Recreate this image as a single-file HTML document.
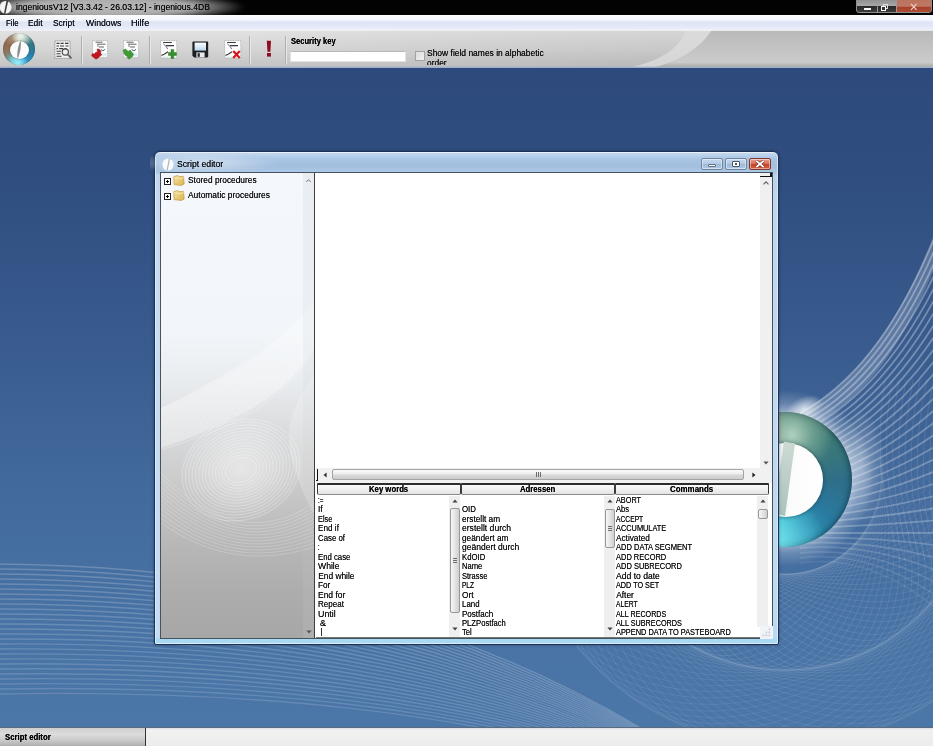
<!DOCTYPE html>
<html>
<head>
<meta charset="utf-8">
<title>ingeniousV12</title>
<style>
*{box-sizing:border-box;margin:0;padding:0}
html,body{width:933px;height:746px;overflow:hidden;background:linear-gradient(#020202 0,#020202 15px,#eef1fa 15px,#eef1fa 30px,#d0d0d0 30px,#d0d0d0 68px,#2e4a7c 68px,#385a8d 332px,#42699b 477px,#4b76a8 727px,#ececec 727px,#ececec 746px);font-family:"Liberation Sans",sans-serif;font-size:8.6px;color:#000}
.abs,.t{position:absolute}
.t{white-space:nowrap;transform-origin:0 0;display:block;text-shadow:0 0 .6px rgba(0,0,0,.8)}
#title{left:0;top:0;width:933px;height:15px;background:#020202;overflow:hidden}
#title .glow{left:-34px;top:-8px;width:280px;height:30px;background:radial-gradient(ellipse 50% 50% at 50% 50%,rgba(184,184,184,1) 0,rgba(172,172,172,1) 62%,rgba(110,110,110,.7) 84%,rgba(0,0,0,0) 100%);filter:blur(2px)}
#menu{left:0;top:15px;width:933px;height:15px;background:linear-gradient(#fcfdff 0,#f1f4fc 38%,#dfe5f6 45%,#e2e8f7 75%,#eef1fa 100%)}
#tool{left:0;top:30px;width:933px;height:38px;background:#d2d2d2;overflow:hidden}
#desk{left:0;top:68px;width:933px;height:660px;background:linear-gradient(#2e4a7c 0,#2f4d7f 15%,#385a8d 40%,#42699b 62%,#4973a5 85%,#4b76a8 100%);overflow:hidden}
#status{left:0;top:727px;width:933px;height:19px;background:linear-gradient(#d9dde2 0,#f1f1f1 2px,#ececec 100%);border-top:1px solid #5a6b80}
#status .cell{left:0;top:0;width:146px;height:18px;background:linear-gradient(#cfcfcf 0,#dcdcdc 35%,#c9c9c9 70%,#aeaeae 100%);border-right:1px solid #333}
.sep{width:2px;height:28px;top:6px;background:linear-gradient(90deg,#b0b0b0 0,#b0b0b0 50%,#e6e6e6 50%)}
#win{left:154px;top:150.5px;width:625px;height:494px;border-radius:6px 6px 2px 2px;border:1px solid #1c3357;background:linear-gradient(#c9dcf1 0,#a9c5e4 7px,#a2bfdf 14px,#afcae6 21px,#b7d3ee 60px,#b3d6f0 400px,#aad9f3 100%);box-shadow:inset 0 0 0 1px rgba(255,255,255,.55),0 0 3px rgba(10,20,40,.45)}
#client{left:160px;top:172px;width:613px;height:467px;border:1px solid #46525f;background:#fff;overflow:hidden}
.wb{top:158px;height:12px;border-radius:2px;border:1px solid #6f86a3;box-shadow:inset 0 0 0 1px rgba(255,255,255,.45)}
.hdr{height:11.6px;border:1px solid #3a3a3a;border-top:2px solid #2c2c2c;border-bottom:1px solid #8a8a8a;border-radius:1px 1px 2px 2px;background:linear-gradient(#fbfbfb,#e4e4e4)}
.sb{width:11px;background:#efefef}
.th{border:1px solid #979797;border-radius:2px;background:linear-gradient(90deg,#f7f7f7 0,#e4e4e4 50%,#cfcfcf 100%)}
.arr{width:0;height:0;border-style:solid}
#all{left:0;top:0;width:933px;height:746px;overflow:hidden;filter:blur(.4px)}
</style>
</head>
<body>
<div id="all" class="abs">

<div id="title" class="abs"><div class="glow abs"></div>
<svg class="abs" style="left:0;top:0" width="14" height="15" viewBox="0 0 14 15"><ellipse cx="5.6" cy="7.3" rx="5.9" ry="6.3" fill="#f4f4f4"/><path d="M6.6 0.6 L8.2 0.9 L5.3 14 L3.9 13.6 Z" fill="#3a3a3a"/></svg>
<span class="t" style="left:16.00px;top:3.19px;font-size:8.75px;line-height:8.75px;color:#0a0a0a;transform:scaleX(0.9847);">ingeniousV12 [V3.3.42 - 26.03.12] - ingenious.4DB</span>
<div class="abs" style="left:856px;top:-2px;width:76px;height:14.5px;border:1px solid #8f8f8f;border-radius:0 0 3px 3px;overflow:hidden;background:linear-gradient(#8d8d8d 0,#a9a9a9 52%,#2b2b2b 57%,#3a3a3a 100%)">
<div class="abs" style="left:19.5px;top:0;width:1px;height:14px;background:#9a9a9a"></div>
<div class="abs" style="left:38.5px;top:0;width:1px;height:14px;background:#9a9a9a"></div>
<div class="abs" style="left:39.5px;top:0;width:36px;height:14px;background:linear-gradient(#b8735f 0,#c07863 52%,#a8412c 58%,#b04d35 100%)"></div>
<div class="abs" style="left:6.5px;top:8.6px;width:7.6px;height:2.2px;background:#fff;border-radius:.5px"></div>
<div class="abs" style="left:25.5px;top:4.5px;width:5px;height:5px;border:1.2px solid #ddd"></div>
<div class="abs" style="left:23.5px;top:6.5px;width:5.5px;height:5.5px;border:1.3px solid #fff;background:#333"></div>
<svg class="abs" style="left:53.2px;top:4px" width="8" height="8" viewBox="0 0 8 8"><path d="M1 0.8 L6.6 6.8 M6.6 0.8 L1 6.8" stroke="#f0d2c8" stroke-width="1.1" fill="none"/></svg>
</div>
</div>
<div id="menu" class="abs">
<span class="t" style="left:5.50px;top:3.69px;font-size:8.75px;line-height:8.75px;color:#0c0c14;transform:scaleX(0.9007);">File</span>
<span class="t" style="left:28.30px;top:3.69px;font-size:8.75px;line-height:8.75px;color:#0c0c14;transform:scaleX(0.9617);">Edit</span>
<span class="t" style="left:53.40px;top:3.69px;font-size:8.75px;line-height:8.75px;color:#0c0c14;transform:scaleX(0.9612);">Script</span>
<span class="t" style="left:85.50px;top:3.69px;font-size:8.75px;line-height:8.75px;color:#0c0c14;transform:scaleX(0.9945);">Windows</span>
<span class="t" style="left:131.40px;top:3.69px;font-size:8.75px;line-height:8.75px;color:#0c0c14;transform:scaleX(1.0397);">Hilfe</span>
</div>
<div id="tool" class="abs">
<svg class="abs" style="left:0;top:0" width="933" height="38" viewBox="0 0 933 38">
<defs>
<linearGradient id="tl" x1="0" y1="0" x2="0" y2="1"><stop offset="0" stop-color="#e2e2e2"/><stop offset=".45" stop-color="#d6d6d6"/><stop offset="1" stop-color="#c3c3c3"/></linearGradient>
<linearGradient id="tr" x1="0" y1="0" x2="0" y2="1"><stop offset="0" stop-color="#b9b9b9"/><stop offset=".5" stop-color="#c3c3c3"/><stop offset=".85" stop-color="#cbcbcb"/><stop offset=".93" stop-color="#b4b4b0"/><stop offset="1" stop-color="#aaaaa6"/></linearGradient>
<linearGradient id="tdk" x1="0" y1="0" x2="1" y2="0"><stop offset="0" stop-color="#000" stop-opacity="0"/><stop offset=".6" stop-color="#000" stop-opacity=".055"/><stop offset="1" stop-color="#000" stop-opacity=".055"/></linearGradient>
<linearGradient id="tb" x1="0" y1="0" x2="1" y2="0"><stop offset="0" stop-color="#d9d9d9" stop-opacity="0"/><stop offset="1" stop-color="#e6e6e6" stop-opacity=".9"/></linearGradient>
<linearGradient id="rf" x1="0" y1="0" x2="1" y2="0"><stop offset="0" stop-color="#c9c9c9" stop-opacity="1"/><stop offset="1" stop-color="#c9c9c9" stop-opacity="0"/></linearGradient>
</defs>
<rect x="0" y="0" width="933" height="38" fill="url(#tl)"/>
<rect x="250" y="0" width="683" height="38" fill="url(#tdk)"/>
<path d="M686 0 C680 18 660 32 626 38 L651 38 C680 32 700 18 712 0 Z" fill="#dcdcdc" opacity=".8"/>
<path d="M712 0 C700 18 680 32 651 38 L933 38 L933 0 Z" fill="url(#tr)"/>
<rect x="0" y="0" width="933" height="1" fill="#f4f4f4" opacity=".8"/>
<rect x="0" y="36.6" width="933" height="1.4" fill="#9fb0c6"/>
</svg>
<div class="abs" style="left:0.4px;top:0.3px;width:38px;height:38px;border-radius:50%;background:radial-gradient(circle,rgba(240,214,204,.0) 0,rgba(240,214,204,.0) 78%,rgba(240,214,204,.6) 84%,rgba(240,214,204,0) 100%)"></div>
<div class="abs" style="left:3.4px;top:3.3px;width:32px;height:32px;border-radius:50%;background:conic-gradient(from 0deg,#ccd6ca 0deg,#86a79c 30deg,#2f7787 70deg,#2a7ca6 110deg,#2f9acb 150deg,#63d2ec 182deg,#68b6bf 215deg,#8c7a62 250deg,#92694c 290deg,#ab927a 330deg,#ccd6ca 360deg);box-shadow:inset 0 0 2px rgba(20,50,60,.55)"></div>
<div class="abs" style="left:3.4px;top:3.3px;width:32px;height:32px;border-radius:50%;background:radial-gradient(circle at 58% 10%,rgba(245,250,245,.85) 0,rgba(245,250,245,0) 30%),radial-gradient(circle at 45% 97%,rgba(170,240,250,.85) 0,rgba(120,220,240,0) 32%)"></div>
<div class="abs" style="left:10.2px;top:10.6px;width:18.4px;height:18px;border-radius:50%;background:#fbfbfb;box-shadow:0 0 1.5px rgba(20,40,50,.7)"></div>
<svg class="abs" style="left:14px;top:9px" width="12" height="22" viewBox="0 0 12 22"><path d="M6.6 1.2 C7.6 6 6.2 14 3.6 20.2 C2.6 15 3.8 7 6.6 1.2 Z" fill="#8d8d8d"/></svg>
<svg class="abs" style="left:54px;top:9.5px" width="19" height="20" viewBox="0 0 19 20">
<rect x=".9" y=".9" width="15.2" height="17.4" fill="#f4f4f4" stroke="#8c8c8c" stroke-width=".9" stroke-dasharray="1.2 .5"/>
<g stroke="#3c3c3c" stroke-width="1.1"><path d="M2.5 3.4h3M6.5 3.4h3.2M11 3.4h3.5M2.5 6h2.5M6 6h4M11.5 6h3M2.5 8.6h1.6M5.2 8.6h4M10.5 8.6h2M2.5 11.2h4.5M2.5 13.8h4M2.5 16.2h5"/></g>
<circle cx="11.3" cy="12" r="3.1" fill="#e9eef2" stroke="#444" stroke-width="1.1"/>
<path d="M13.6 14.4 L17 17.8" stroke="#6b5a50" stroke-width="1.7" stroke-linecap="round"/>
</svg>
<svg class="abs" style="left:92.0px;top:10px" width="17" height="19" viewBox="0 0 17 19">
<rect x=".6" y=".6" width="15" height="17" fill="#fcfcfc" stroke="#a9a9a9" stroke-width=".8" stroke-dasharray="1.1 .6"/>
<path d="M3.5 2.2h7M5 4.2 h8.5 M6 5.2v1.6M7 7h5" stroke="#555" stroke-width=".9" fill="none"/>
<path d="M9 9.2c0 2 3.6 2 3.6 0" stroke="#3b5f8a" stroke-width="1" fill="none"/>
<path d="M10 13h4.5v3.5H10z" fill="#dff0f4"/>
</svg>
<svg class="abs" style="left:90.5px;top:17.5px" width="12" height="12" viewBox="0 0 12 12"><path d="M6.2 1 C8.8 1 10.6 3 9.6 5.8 L11 6.6 L6 10.8 L4.8 11 L0.6 7.8 L1.6 5.4 L3.6 6.2 C4 4.6 5 4 6.4 4.4 Z" fill="#c4141c" stroke="#8e0c12" stroke-width=".5"/></svg>
<svg class="abs" style="left:123.0px;top:10px" width="17" height="19" viewBox="0 0 17 19">
<rect x=".6" y=".6" width="15" height="17" fill="#fcfcfc" stroke="#a9a9a9" stroke-width=".8" stroke-dasharray="1.1 .6"/>
<path d="M3.5 2.2h7M5 4.2 h8.5 M6 5.2v1.6M7 7h5" stroke="#555" stroke-width=".9" fill="none"/>
<path d="M9 9.2c0 2 3.6 2 3.6 0" stroke="#3b5f8a" stroke-width="1" fill="none"/>
<path d="M10 13h4.5v3.5H10z" fill="#dff0f4"/>
</svg>
<svg class="abs" style="left:121.5px;top:17.5px" width="13" height="12" viewBox="0 0 13 12"><path d="M1 2.2 L3.4 1 L6.2 3.4 L8 2 L11.6 6.2 L10.4 8.6 L7.4 11 L5.6 10.2 L6 8.8 C4 8.6 2 6.6 1 2.2 Z" fill="#3f9c34" stroke="#2a7a22" stroke-width=".5"/></svg>
<svg class="abs" style="left:160.0px;top:10px" width="18" height="19" viewBox="0 0 18 19">
<rect x=".6" y=".6" width="16.2" height="17.4" fill="#fcfcfc" stroke="#a9a9a9" stroke-width=".8" stroke-dasharray="1.1 .6"/>
<path d="M3.2 2.5h8.6M6 5.6 h8" stroke="#3a3a3a" stroke-width="1.1" fill="none"/>
<path d="M3.4 3.8 L6 6.4 L7.8 9" stroke="#7a4a8a" stroke-width=".9" fill="none"/>
<path d="M1.4 15.4 L4.6 14 L8 11.8" stroke="#333" stroke-width="1.1" fill="none"/>
<path d="M1.5 16.6h7v1.2h-7z" fill="#cfeaea"/>
</svg>
<svg class="abs" style="left:168.3px;top:19.3px" width="9" height="10" viewBox="0 0 9 10"><path d="M3 .6h2.8v3h2.6v2.8H5.8v3H3v-3H.4V3.600H3z" fill="#35912c" stroke="#2b7d22" stroke-width=".5"/></svg>
<svg class="abs" style="left:191.5px;top:11px" width="17" height="17" viewBox="0 0 17 17">
<defs><linearGradient id="fl" x1="0" y1="0" x2="0" y2="1"><stop offset="0" stop-color="#ffffff"/><stop offset="1" stop-color="#b9d6ee"/></linearGradient></defs>
<path d="M1.2 .6h14.2a.8.8 0 0 1 .8.8v14.2a.8.8 0 0 1-.8.8H2.2L.4 14.8V1.4a.8.8 0 0 1 .8-.8z" fill="#1e1f22"/>
<rect x="2.6" y="1.6" width="11.4" height="8" fill="url(#fl)"/>
<rect x="4.4" y="11.4" width="8.2" height="5" fill="#e6e9ee"/>
<rect x="5.6" y="12.2" width="2.2" height="3.6" fill="#24262a"/>
</svg>
<svg class="abs" style="left:223.5px;top:10px" width="18" height="19" viewBox="0 0 18 19">
<rect x=".6" y=".6" width="16.2" height="17.4" fill="#fcfcfc" stroke="#a9a9a9" stroke-width=".8" stroke-dasharray="1.1 .6"/>
<path d="M3.2 2.5h8.6M6 5.6 h8" stroke="#3a3a3a" stroke-width="1.1" fill="none"/>
<path d="M3.4 3.8 L6 6.4 L7.8 9" stroke="#7a4a8a" stroke-width=".9" fill="none"/>
<path d="M1.4 15.4 L4.6 14 L8 11.8" stroke="#333" stroke-width="1.1" fill="none"/>
<path d="M1.5 16.6h7v1.2h-7z" fill="#cfeaea"/>
</svg>
<svg class="abs" style="left:231.6px;top:19.6px" width="9" height="9" viewBox="0 0 9 9"><path d="M1.2 1 L7.8 8 M7.8 1 L1.2 8" stroke="#d4161c" stroke-width="2.2" fill="none"/></svg>
<svg class="abs" style="left:264.5px;top:10px" width="8" height="18" viewBox="0 0 8 18"><path d="M1.8 .8h4.2l-.7 11H2.5z" fill="#8f0a1c"/><rect x="2" y="13" width="3.9" height="3.6" fill="#8f0a1c"/></svg>
<div class="abs sep" style="left:80.5px"></div>
<div class="abs sep" style="left:148.8px"></div>
<div class="abs sep" style="left:249.2px"></div>
<div class="abs sep" style="left:284.6px"></div>
<span class="t" style="left:291.10px;top:7.39px;font-size:8.75px;line-height:8.75px;color:#000;font-weight:bold;transform:scaleX(0.8650);">Security key</span>
<div class="abs" style="left:290px;top:21px;width:115.5px;height:11px;background:#fff;border:1px solid #e3e3e3;border-top-color:#b9b9b9"></div>
<div class="abs" style="left:415px;top:21px;width:10px;height:10px;background:linear-gradient(135deg,#dedede,#f0f0f0);border:1px solid #a2a2a2"></div>
<div class="abs" style="left:0;top:0;width:933px;height:35.3px;overflow:hidden">
<span class="t" style="left:427.40px;top:19.10px;font-size:8.50px;line-height:8.50px;color:#0a0a0a;transform:scaleX(0.9959);">Show field names in alphabetic</span>
<span class="t" style="left:427.40px;top:29.40px;font-size:8.50px;line-height:8.50px;color:#0a0a0a;transform:scaleX(0.9877);">order</span>
</div>
</div>
<div id="desk" class="abs">
<svg class="abs" style="left:0;top:0" width="933" height="660" viewBox="0 68 933 660" fill="none">
<defs>
<radialGradient id="halo" cx=".5" cy=".5" r=".5"><stop offset=".72" stop-color="#ffffff" stop-opacity=".55"/><stop offset=".86" stop-color="#dfeaf6" stop-opacity=".22"/><stop offset="1" stop-color="#ffffff" stop-opacity="0"/></radialGradient>
<linearGradient id="ring" x1=".2" y1="0" x2=".75" y2="1"><stop offset="0" stop-color="#8a6a58"/><stop offset=".25" stop-color="#4f7f6c"/><stop offset=".55" stop-color="#2b6a8c"/><stop offset=".8" stop-color="#2d86aa"/><stop offset="1" stop-color="#2fb4cc"/></linearGradient>
<radialGradient id="ringb" cx=".42" cy=".98" r=".42"><stop offset="0" stop-color="#6fe4f0" stop-opacity=".95"/><stop offset="1" stop-color="#35bcd0" stop-opacity="0"/></radialGradient>
<radialGradient id="ringt" cx=".55" cy=".05" r=".3"><stop offset="0" stop-color="#d8eadf" stop-opacity=".8"/><stop offset="1" stop-color="#9cc4b4" stop-opacity="0"/></radialGradient>
<radialGradient id="ringe" cx=".5" cy=".5" r=".5"><stop offset=".86" stop-color="#000" stop-opacity="0"/><stop offset="1" stop-color="#0a2a3a" stop-opacity=".35"/></radialGradient>
<linearGradient id="lowg" gradientUnits="userSpaceOnUse" x1="0" y1="430" x2="0" y2="560"><stop offset="0" stop-color="#000"/><stop offset="1" stop-color="#fff"/></linearGradient>
<radialGradient id="glw" cx=".5" cy=".5" r=".5"><stop offset="0" stop-color="#fff" stop-opacity=".75"/><stop offset="1" stop-color="#fff" stop-opacity="0"/></radialGradient>
<linearGradient id="fanfade" x1="0" y1="0" x2="1" y2="0"><stop offset="0" stop-color="#fff" stop-opacity=".5"/><stop offset="1" stop-color="#fff" stop-opacity=".22"/></linearGradient>
</defs>
<mask id="lowm"><rect x="0" y="68" width="933" height="660" fill="url(#lowg)"/></mask>
<g mask="url(#lowm)">
<ellipse cx="785" cy="478" rx="192" ry="96" transform="rotate(0 785 478)" stroke="#fff" stroke-opacity=".085" stroke-width="1"/>
<ellipse cx="785" cy="478" rx="192" ry="96" transform="rotate(4 785 478)" stroke="#fff" stroke-opacity=".085" stroke-width="1"/>
<ellipse cx="785" cy="478" rx="192" ry="96" transform="rotate(8 785 478)" stroke="#fff" stroke-opacity=".085" stroke-width="1"/>
<ellipse cx="785" cy="478" rx="192" ry="96" transform="rotate(12 785 478)" stroke="#fff" stroke-opacity=".085" stroke-width="1"/>
<ellipse cx="785" cy="478" rx="192" ry="96" transform="rotate(16 785 478)" stroke="#fff" stroke-opacity=".085" stroke-width="1"/>
<ellipse cx="785" cy="478" rx="192" ry="96" transform="rotate(20 785 478)" stroke="#fff" stroke-opacity=".085" stroke-width="1"/>
<ellipse cx="785" cy="478" rx="192" ry="96" transform="rotate(24 785 478)" stroke="#fff" stroke-opacity=".085" stroke-width="1"/>
<ellipse cx="785" cy="478" rx="192" ry="96" transform="rotate(28 785 478)" stroke="#fff" stroke-opacity=".085" stroke-width="1"/>
<ellipse cx="785" cy="478" rx="192" ry="96" transform="rotate(32 785 478)" stroke="#fff" stroke-opacity=".085" stroke-width="1"/>
<ellipse cx="785" cy="478" rx="192" ry="96" transform="rotate(36 785 478)" stroke="#fff" stroke-opacity=".085" stroke-width="1"/>
<ellipse cx="785" cy="478" rx="192" ry="96" transform="rotate(40 785 478)" stroke="#fff" stroke-opacity=".085" stroke-width="1"/>
<ellipse cx="785" cy="478" rx="192" ry="96" transform="rotate(44 785 478)" stroke="#fff" stroke-opacity=".085" stroke-width="1"/>
<ellipse cx="785" cy="478" rx="192" ry="96" transform="rotate(48 785 478)" stroke="#fff" stroke-opacity=".085" stroke-width="1"/>
<ellipse cx="785" cy="478" rx="192" ry="96" transform="rotate(52 785 478)" stroke="#fff" stroke-opacity=".085" stroke-width="1"/>
<ellipse cx="785" cy="478" rx="192" ry="96" transform="rotate(56 785 478)" stroke="#fff" stroke-opacity=".085" stroke-width="1"/>
<ellipse cx="785" cy="478" rx="192" ry="96" transform="rotate(60 785 478)" stroke="#fff" stroke-opacity=".085" stroke-width="1"/>
<ellipse cx="785" cy="478" rx="192" ry="96" transform="rotate(64 785 478)" stroke="#fff" stroke-opacity=".085" stroke-width="1"/>
<ellipse cx="785" cy="478" rx="192" ry="96" transform="rotate(68 785 478)" stroke="#fff" stroke-opacity=".085" stroke-width="1"/>
<ellipse cx="785" cy="478" rx="192" ry="96" transform="rotate(72 785 478)" stroke="#fff" stroke-opacity=".085" stroke-width="1"/>
<ellipse cx="785" cy="478" rx="192" ry="96" transform="rotate(76 785 478)" stroke="#fff" stroke-opacity=".085" stroke-width="1"/>
<ellipse cx="785" cy="478" rx="192" ry="96" transform="rotate(80 785 478)" stroke="#fff" stroke-opacity=".085" stroke-width="1"/>
<ellipse cx="785" cy="478" rx="192" ry="96" transform="rotate(84 785 478)" stroke="#fff" stroke-opacity=".085" stroke-width="1"/>
<ellipse cx="785" cy="478" rx="192" ry="96" transform="rotate(88 785 478)" stroke="#fff" stroke-opacity=".085" stroke-width="1"/>
<ellipse cx="785" cy="478" rx="192" ry="96" transform="rotate(92 785 478)" stroke="#fff" stroke-opacity=".085" stroke-width="1"/>
<ellipse cx="785" cy="478" rx="192" ry="96" transform="rotate(96 785 478)" stroke="#fff" stroke-opacity=".085" stroke-width="1"/>
<ellipse cx="785" cy="478" rx="192" ry="96" transform="rotate(100 785 478)" stroke="#fff" stroke-opacity=".085" stroke-width="1"/>
<ellipse cx="785" cy="478" rx="192" ry="96" transform="rotate(104 785 478)" stroke="#fff" stroke-opacity=".085" stroke-width="1"/>
<ellipse cx="785" cy="478" rx="192" ry="96" transform="rotate(108 785 478)" stroke="#fff" stroke-opacity=".085" stroke-width="1"/>
<ellipse cx="785" cy="478" rx="192" ry="96" transform="rotate(112 785 478)" stroke="#fff" stroke-opacity=".085" stroke-width="1"/>
<ellipse cx="785" cy="478" rx="192" ry="96" transform="rotate(116 785 478)" stroke="#fff" stroke-opacity=".085" stroke-width="1"/>
<ellipse cx="785" cy="478" rx="192" ry="96" transform="rotate(120 785 478)" stroke="#fff" stroke-opacity=".085" stroke-width="1"/>
<ellipse cx="785" cy="478" rx="192" ry="96" transform="rotate(124 785 478)" stroke="#fff" stroke-opacity=".085" stroke-width="1"/>
<ellipse cx="785" cy="478" rx="192" ry="96" transform="rotate(128 785 478)" stroke="#fff" stroke-opacity=".085" stroke-width="1"/>
<ellipse cx="785" cy="478" rx="192" ry="96" transform="rotate(132 785 478)" stroke="#fff" stroke-opacity=".085" stroke-width="1"/>
<ellipse cx="785" cy="478" rx="192" ry="96" transform="rotate(136 785 478)" stroke="#fff" stroke-opacity=".085" stroke-width="1"/>
<ellipse cx="785" cy="478" rx="192" ry="96" transform="rotate(140 785 478)" stroke="#fff" stroke-opacity=".085" stroke-width="1"/>
<ellipse cx="785" cy="478" rx="192" ry="96" transform="rotate(144 785 478)" stroke="#fff" stroke-opacity=".085" stroke-width="1"/>
<ellipse cx="785" cy="478" rx="192" ry="96" transform="rotate(148 785 478)" stroke="#fff" stroke-opacity=".085" stroke-width="1"/>
<ellipse cx="785" cy="478" rx="192" ry="96" transform="rotate(152 785 478)" stroke="#fff" stroke-opacity=".085" stroke-width="1"/>
<ellipse cx="785" cy="478" rx="192" ry="96" transform="rotate(156 785 478)" stroke="#fff" stroke-opacity=".085" stroke-width="1"/>
<ellipse cx="785" cy="478" rx="192" ry="96" transform="rotate(160 785 478)" stroke="#fff" stroke-opacity=".085" stroke-width="1"/>
<ellipse cx="785" cy="478" rx="192" ry="96" transform="rotate(164 785 478)" stroke="#fff" stroke-opacity=".085" stroke-width="1"/>
<ellipse cx="785" cy="478" rx="192" ry="96" transform="rotate(168 785 478)" stroke="#fff" stroke-opacity=".085" stroke-width="1"/>
<ellipse cx="785" cy="478" rx="192" ry="96" transform="rotate(172 785 478)" stroke="#fff" stroke-opacity=".085" stroke-width="1"/>
<ellipse cx="785" cy="478" rx="192" ry="96" transform="rotate(176 785 478)" stroke="#fff" stroke-opacity=".085" stroke-width="1"/>
<ellipse cx="785" cy="478" rx="268" ry="192" transform="rotate(0 785 478)" stroke="#fff" stroke-opacity=".075" stroke-width="1"/>
<ellipse cx="785" cy="478" rx="268" ry="192" transform="rotate(5 785 478)" stroke="#fff" stroke-opacity=".075" stroke-width="1"/>
<ellipse cx="785" cy="478" rx="268" ry="192" transform="rotate(10 785 478)" stroke="#fff" stroke-opacity=".075" stroke-width="1"/>
<ellipse cx="785" cy="478" rx="268" ry="192" transform="rotate(15 785 478)" stroke="#fff" stroke-opacity=".075" stroke-width="1"/>
<ellipse cx="785" cy="478" rx="268" ry="192" transform="rotate(20 785 478)" stroke="#fff" stroke-opacity=".075" stroke-width="1"/>
<ellipse cx="785" cy="478" rx="268" ry="192" transform="rotate(25 785 478)" stroke="#fff" stroke-opacity=".075" stroke-width="1"/>
<ellipse cx="785" cy="478" rx="268" ry="192" transform="rotate(30 785 478)" stroke="#fff" stroke-opacity=".075" stroke-width="1"/>
<ellipse cx="785" cy="478" rx="268" ry="192" transform="rotate(35 785 478)" stroke="#fff" stroke-opacity=".075" stroke-width="1"/>
<ellipse cx="785" cy="478" rx="268" ry="192" transform="rotate(40 785 478)" stroke="#fff" stroke-opacity=".075" stroke-width="1"/>
<ellipse cx="785" cy="478" rx="268" ry="192" transform="rotate(45 785 478)" stroke="#fff" stroke-opacity=".075" stroke-width="1"/>
<ellipse cx="785" cy="478" rx="268" ry="192" transform="rotate(50 785 478)" stroke="#fff" stroke-opacity=".075" stroke-width="1"/>
<ellipse cx="785" cy="478" rx="268" ry="192" transform="rotate(55 785 478)" stroke="#fff" stroke-opacity=".075" stroke-width="1"/>
<ellipse cx="785" cy="478" rx="268" ry="192" transform="rotate(60 785 478)" stroke="#fff" stroke-opacity=".075" stroke-width="1"/>
<ellipse cx="785" cy="478" rx="268" ry="192" transform="rotate(65 785 478)" stroke="#fff" stroke-opacity=".075" stroke-width="1"/>
<ellipse cx="785" cy="478" rx="268" ry="192" transform="rotate(70 785 478)" stroke="#fff" stroke-opacity=".075" stroke-width="1"/>
<ellipse cx="785" cy="478" rx="268" ry="192" transform="rotate(75 785 478)" stroke="#fff" stroke-opacity=".075" stroke-width="1"/>
<ellipse cx="785" cy="478" rx="268" ry="192" transform="rotate(80 785 478)" stroke="#fff" stroke-opacity=".075" stroke-width="1"/>
<ellipse cx="785" cy="478" rx="268" ry="192" transform="rotate(85 785 478)" stroke="#fff" stroke-opacity=".075" stroke-width="1"/>
<ellipse cx="785" cy="478" rx="268" ry="192" transform="rotate(90 785 478)" stroke="#fff" stroke-opacity=".075" stroke-width="1"/>
<ellipse cx="785" cy="478" rx="268" ry="192" transform="rotate(95 785 478)" stroke="#fff" stroke-opacity=".075" stroke-width="1"/>
<ellipse cx="785" cy="478" rx="268" ry="192" transform="rotate(100 785 478)" stroke="#fff" stroke-opacity=".075" stroke-width="1"/>
<ellipse cx="785" cy="478" rx="268" ry="192" transform="rotate(105 785 478)" stroke="#fff" stroke-opacity=".075" stroke-width="1"/>
<ellipse cx="785" cy="478" rx="268" ry="192" transform="rotate(110 785 478)" stroke="#fff" stroke-opacity=".075" stroke-width="1"/>
<ellipse cx="785" cy="478" rx="268" ry="192" transform="rotate(115 785 478)" stroke="#fff" stroke-opacity=".075" stroke-width="1"/>
<ellipse cx="785" cy="478" rx="268" ry="192" transform="rotate(120 785 478)" stroke="#fff" stroke-opacity=".075" stroke-width="1"/>
<ellipse cx="785" cy="478" rx="268" ry="192" transform="rotate(125 785 478)" stroke="#fff" stroke-opacity=".075" stroke-width="1"/>
<ellipse cx="785" cy="478" rx="268" ry="192" transform="rotate(130 785 478)" stroke="#fff" stroke-opacity=".075" stroke-width="1"/>
<ellipse cx="785" cy="478" rx="268" ry="192" transform="rotate(135 785 478)" stroke="#fff" stroke-opacity=".075" stroke-width="1"/>
<ellipse cx="785" cy="478" rx="268" ry="192" transform="rotate(140 785 478)" stroke="#fff" stroke-opacity=".075" stroke-width="1"/>
<ellipse cx="785" cy="478" rx="268" ry="192" transform="rotate(145 785 478)" stroke="#fff" stroke-opacity=".075" stroke-width="1"/>
<ellipse cx="785" cy="478" rx="268" ry="192" transform="rotate(150 785 478)" stroke="#fff" stroke-opacity=".075" stroke-width="1"/>
<ellipse cx="785" cy="478" rx="268" ry="192" transform="rotate(155 785 478)" stroke="#fff" stroke-opacity=".075" stroke-width="1"/>
<ellipse cx="785" cy="478" rx="268" ry="192" transform="rotate(160 785 478)" stroke="#fff" stroke-opacity=".075" stroke-width="1"/>
<ellipse cx="785" cy="478" rx="268" ry="192" transform="rotate(165 785 478)" stroke="#fff" stroke-opacity=".075" stroke-width="1"/>
<ellipse cx="785" cy="478" rx="268" ry="192" transform="rotate(170 785 478)" stroke="#fff" stroke-opacity=".075" stroke-width="1"/>
<ellipse cx="785" cy="478" rx="268" ry="192" transform="rotate(175 785 478)" stroke="#fff" stroke-opacity=".075" stroke-width="1"/>
</g>
<path d="M800.0 413.0 Q880.0 370.0 933.5 240.0" stroke="#fff" stroke-opacity="0.33" stroke-width="1.8"/>
<path d="M800.0 418.0 Q879.4 376.8 933.5 252.2" stroke="#fff" stroke-opacity="0.33" stroke-width="1.8"/>
<path d="M800.0 423.0 Q878.8 383.6 933.5 264.4" stroke="#fff" stroke-opacity="0.32" stroke-width="1.8"/>
<path d="M800.0 428.0 Q878.2 390.4 933.5 276.6" stroke="#fff" stroke-opacity="0.32" stroke-width="1.8"/>
<path d="M800.0 433.0 Q877.7 397.2 933.5 288.8" stroke="#fff" stroke-opacity="0.32" stroke-width="1.8"/>
<path d="M800.0 438.0 Q877.1 404.0 933.5 301.0" stroke="#fff" stroke-opacity="0.31" stroke-width="1.8"/>
<path d="M800.0 443.0 Q876.5 410.8 933.5 313.2" stroke="#fff" stroke-opacity="0.31" stroke-width="1.8"/>
<path d="M800.0 448.0 Q875.9 417.5 933.5 325.4" stroke="#fff" stroke-opacity="0.31" stroke-width="1.8"/>
<path d="M800.0 453.0 Q875.3 424.3 933.5 337.6" stroke="#fff" stroke-opacity="0.30" stroke-width="1.8"/>
<path d="M800.0 458.0 Q874.8 431.1 933.5 349.8" stroke="#fff" stroke-opacity="0.30" stroke-width="1.8"/>
<path d="M800.0 463.0 Q874.2 437.9 933.5 362.0" stroke="#fff" stroke-opacity="0.30" stroke-width="1.8"/>
<path d="M800.0 468.0 Q873.6 444.7 933.5 374.2" stroke="#fff" stroke-opacity="0.29" stroke-width="1.8"/>
<path d="M800.0 473.0 Q873.0 451.5 933.5 386.4" stroke="#fff" stroke-opacity="0.29" stroke-width="1.8"/>
<path d="M800.0 478.0 Q872.4 458.3 933.5 398.6" stroke="#fff" stroke-opacity="0.29" stroke-width="1.8"/>
<path d="M800.0 483.0 Q871.8 465.1 933.5 410.8" stroke="#fff" stroke-opacity="0.28" stroke-width="1.8"/>
<path d="M800.0 488.0 Q871.2 471.9 933.5 423.0" stroke="#fff" stroke-opacity="0.28" stroke-width="1.8"/>
<path d="M800.0 493.0 Q870.7 478.7 933.5 435.2" stroke="#fff" stroke-opacity="0.28" stroke-width="1.8"/>
<path d="M800.0 498.0 Q870.1 485.5 933.5 447.4" stroke="#fff" stroke-opacity="0.27" stroke-width="1.8"/>
<path d="M800.0 503.0 Q869.5 492.2 933.5 459.6" stroke="#fff" stroke-opacity="0.27" stroke-width="1.8"/>
<path d="M800.0 508.0 Q868.9 499.0 933.5 471.8" stroke="#fff" stroke-opacity="0.27" stroke-width="1.8"/>
<path d="M800.0 513.0 Q868.3 505.8 933.5 484.0" stroke="#fff" stroke-opacity="0.26" stroke-width="1.8"/>
<path d="M800.0 518.0 Q867.8 512.6 933.5 496.2" stroke="#fff" stroke-opacity="0.26" stroke-width="1.8"/>
<path d="M800.0 523.0 Q867.2 519.4 933.5 508.4" stroke="#fff" stroke-opacity="0.26" stroke-width="1.8"/>
<path d="M800.0 528.0 Q866.6 526.2 933.5 520.6" stroke="#fff" stroke-opacity="0.25" stroke-width="1.8"/>
<path d="M800.0 533.0 Q866.0 533.0 933.5 532.8" stroke="#fff" stroke-opacity="0.25" stroke-width="1.8"/>
<path d="M800.0 538.0 Q866.0 536.3 933.5 545.0" stroke="#fff" stroke-opacity="0.20" stroke-width="1.8"/>
<path d="M800.0 543.0 Q866.0 539.7 933.5 557.2" stroke="#fff" stroke-opacity="0.17" stroke-width="1.8"/>
<path d="M800.0 548.0 Q866.0 543.0 933.5 569.4" stroke="#fff" stroke-opacity="0.15" stroke-width="1.8"/>
<path d="M800.0 553.0 Q866.0 546.3 933.5 581.6" stroke="#fff" stroke-opacity="0.12" stroke-width="1.8"/>
<path d="M800.0 558.0 Q866.0 549.7 933.5 593.8" stroke="#fff" stroke-opacity="0.10" stroke-width="1.8"/>
<path d="M800.0 563.0 Q866.0 553.0 933.5 606.0" stroke="#fff" stroke-opacity="0.07" stroke-width="1.8"/>
<path d="M798 414 Q880 372 933.5 236 L933.5 270 Q886 388 812 426 Z" fill="#fff" fill-opacity=".19"/>
<ellipse cx="804" cy="409" rx="20" ry="12" fill="url(#glw)" transform="rotate(-25 804 409)"/>
<ellipse cx="860" cy="468" rx="26" ry="58" fill="url(#glw)" opacity=".55"/>
<path d="M885.0 380 Q870.0 470 900.0 560" stroke="#fff" stroke-opacity=".09" stroke-width="1"/>
<path d="M892.0 380 Q876.0 470 905.0 560" stroke="#fff" stroke-opacity=".09" stroke-width="1"/>
<path d="M899.0 380 Q882.0 470 910.0 560" stroke="#fff" stroke-opacity=".09" stroke-width="1"/>
<path d="M906.0 380 Q888.0 470 915.0 560" stroke="#fff" stroke-opacity=".09" stroke-width="1"/>
<path d="M913.0 380 Q894.0 470 920.0 560" stroke="#fff" stroke-opacity=".09" stroke-width="1"/>
<path d="M920.0 380 Q900.0 470 925.0 560" stroke="#fff" stroke-opacity=".09" stroke-width="1"/>
<path d="M927.0 380 Q906.0 470 930.0 560" stroke="#fff" stroke-opacity=".09" stroke-width="1"/>
<path d="M934.0 380 Q912.0 470 935.0 560" stroke="#fff" stroke-opacity=".09" stroke-width="1"/>
<path d="M941.0 380 Q918.0 470 940.0 560" stroke="#fff" stroke-opacity=".09" stroke-width="1"/>
<path d="M-2 564.0 C220 566.0 470 604.0 720 779.0" stroke="#fff" stroke-opacity="0.20" stroke-width="1.4"/>
<path d="M-2 569.0 C220 570.8 470 607.8 720 779.4" stroke="#fff" stroke-opacity="0.20" stroke-width="1.4"/>
<path d="M-2 574.0 C220 575.5 470 611.7 720 779.8" stroke="#fff" stroke-opacity="0.20" stroke-width="1.4"/>
<path d="M-2 579.0 C220 580.3 470 615.5 720 780.2" stroke="#fff" stroke-opacity="0.19" stroke-width="1.4"/>
<path d="M-2 584.0 C220 585.1 470 619.4 720 780.5" stroke="#fff" stroke-opacity="0.19" stroke-width="1.4"/>
<path d="M-2 589.0 C220 589.8 470 623.2 720 780.9" stroke="#fff" stroke-opacity="0.19" stroke-width="1.4"/>
<path d="M-2 594.0 C220 594.6 470 627.1 720 781.3" stroke="#fff" stroke-opacity="0.19" stroke-width="1.4"/>
<path d="M-2 599.0 C220 599.4 470 630.9 720 781.7" stroke="#fff" stroke-opacity="0.19" stroke-width="1.4"/>
<path d="M-2 604.0 C220 604.2 470 634.8 720 782.1" stroke="#fff" stroke-opacity="0.18" stroke-width="1.4"/>
<path d="M-2 609.0 C220 608.9 470 638.6 720 782.5" stroke="#fff" stroke-opacity="0.18" stroke-width="1.4"/>
<path d="M-2 614.0 C220 613.7 470 642.5 720 782.8" stroke="#fff" stroke-opacity="0.18" stroke-width="1.4"/>
<path d="M-2 619.0 C220 618.5 470 646.3 720 783.2" stroke="#fff" stroke-opacity="0.18" stroke-width="1.4"/>
<path d="M-2 624.0 C220 623.2 470 650.2 720 783.6" stroke="#fff" stroke-opacity="0.18" stroke-width="1.4"/>
<path d="M-2 629.0 C220 628.0 470 654.0 720 784.0" stroke="#fff" stroke-opacity="0.18" stroke-width="1.4"/>
<path d="M-2 634.0 C220 632.8 470 657.8 720 784.4" stroke="#fff" stroke-opacity="0.17" stroke-width="1.4"/>
<path d="M-2 639.0 C220 637.5 470 661.7 720 784.8" stroke="#fff" stroke-opacity="0.17" stroke-width="1.4"/>
<path d="M-2 644.0 C220 642.3 470 665.5 720 785.2" stroke="#fff" stroke-opacity="0.17" stroke-width="1.4"/>
<path d="M-2 649.0 C220 647.1 470 669.4 720 785.5" stroke="#fff" stroke-opacity="0.17" stroke-width="1.4"/>
<path d="M-2 654.0 C220 651.8 470 673.2 720 785.9" stroke="#fff" stroke-opacity="0.17" stroke-width="1.4"/>
<path d="M-2 659.0 C220 656.6 470 677.1 720 786.3" stroke="#fff" stroke-opacity="0.16" stroke-width="1.4"/>
<path d="M-2 664.0 C220 661.4 470 680.9 720 786.7" stroke="#fff" stroke-opacity="0.16" stroke-width="1.4"/>
<path d="M-2 669.0 C220 666.2 470 684.8 720 787.1" stroke="#fff" stroke-opacity="0.16" stroke-width="1.4"/>
<path d="M-2 674.0 C220 670.9 470 688.6 720 787.5" stroke="#fff" stroke-opacity="0.16" stroke-width="1.4"/>
<path d="M-2 679.0 C220 675.7 470 692.5 720 787.8" stroke="#fff" stroke-opacity="0.16" stroke-width="1.4"/>
<path d="M-2 684.0 C220 680.5 470 696.3 720 788.2" stroke="#fff" stroke-opacity="0.15" stroke-width="1.4"/>
<path d="M-2 689.0 C220 685.2 470 700.2 720 788.6" stroke="#fff" stroke-opacity="0.15" stroke-width="1.4"/>
<path d="M-2 694.0 C220 690.0 470 704.0 720 789.0" stroke="#fff" stroke-opacity="0.15" stroke-width="1.4"/>
<circle cx="785" cy="478" r="88" fill="url(#halo)"/>
</svg>
<div class="abs" style="left:717px;top:343.5px;width:135px;height:135px;border-radius:50%;background:conic-gradient(from 0deg,#5a8c7a 0deg,#4c8272 20deg,#3d7a78 50deg,#2f6e88 90deg,#2a7aa0 130deg,#2c98b8 160deg,#30b4c8 180deg,#3ccad8 200deg,#58c0c0 230deg,#8aa090 270deg,#a87060 310deg,#a05848 340deg,#7a7a68 352deg,#5a8c7a 360deg);box-shadow:inset 0 0 6px 1px rgba(10,45,60,.7)"></div>
<div class="abs" style="left:717px;top:343.5px;width:135px;height:135px;border-radius:50%;background:radial-gradient(circle at 56% 17%,rgba(215,238,224,.7) 0,rgba(190,225,205,.35) 14%,rgba(190,225,205,0) 30%),radial-gradient(circle at 42% 97%,rgba(140,240,250,.75) 0,rgba(80,210,230,0) 34%)"></div>
<div class="abs" style="left:748px;top:374.5px;width:74.6px;height:74px;border-radius:50%;background:linear-gradient(90deg,#dde6e2 0,#e8eeec 40%,#fbfbfb 56%,#ffffff 100%);box-shadow:0 0 4px rgba(10,40,50,.6)"></div>
<svg class="abs" style="left:770px;top:370px" width="30" height="82" viewBox="0 0 30 82"><defs><linearGradient id="sl" x1="0" y1="0" x2="0" y2="1"><stop offset="0" stop-color="#cddad3"/><stop offset="1" stop-color="#a9c2bd"/></linearGradient></defs><path d="M14 3.4 L25 5.6 L15 78 L3 75 Z" fill="url(#sl)"/></svg>
</div>
<div id="win" class="abs"></div>
<div class="abs" style="left:155.5px;top:174px;width:4.6px;height:464px;background:rgba(214,224,244,.55)"></div>
<div class="abs" style="left:773px;top:174px;width:4.6px;height:464px;background:rgba(214,224,244,.35)"></div>
<div class="abs" style="left:150px;top:152px;width:150px;height:20px;background:radial-gradient(ellipse 50% 50% at 35% 55%,rgba(255,255,255,.5) 0,rgba(255,255,255,.25) 50%,rgba(255,255,255,0) 100%)"></div>
<svg class="abs" style="left:161.5px;top:157.5px" width="13" height="14" viewBox="0 0 13 14"><ellipse cx="6" cy="6.6" rx="5.6" ry="6.1" fill="#f8fafc"/><path d="M6.9 .8 L8 1.1 L5.6 12.6 L4.6 12.3 Z" fill="#a8aeb6"/></svg>
<span class="t" style="left:176.60px;top:160.29px;font-size:8.75px;line-height:8.75px;color:#0a0f18;transform:scaleX(0.9896);">Script editor</span>
<div class="abs wb" style="left:700.5px;width:22.5px;background:linear-gradient(#c4d8ee 0,#b3cbe6 48%,#9fbbdb 52%,#afc8e4 100%)"><div class="abs" style="left:6.5px;top:5.2px;width:8px;height:3px;background:#fff;border:.8px solid #5d6b7c;border-radius:1px"></div></div>
<div class="abs wb" style="left:724.5px;width:22px;background:linear-gradient(#c4d8ee 0,#b3cbe6 48%,#9fbbdb 52%,#afc8e4 100%)"><div class="abs" style="left:6.8px;top:1.6px;width:7.4px;height:6.4px;background:#fff;border:.9px solid #4d5968;border-radius:1px"></div><div class="abs" style="left:9.2px;top:3.6px;width:2.8px;height:2.2px;background:#4d5968"></div></div>
<div class="abs wb" style="left:748.5px;width:22.5px;border-color:#7a3a30;background:linear-gradient(#e9a293 0,#d9705c 45%,#c8402a 52%,#d65c40 100%)"><svg class="abs" style="left:5.5px;top:1.2px" width="10" height="8" viewBox="0 0 10 8"><path d="M1.4 .9 L8.6 7 M8.6 .9 L1.4 7" stroke="#5a2a22" stroke-width="3" fill="none"/><path d="M1.4 .9 L8.6 7 M8.6 .9 L1.4 7" stroke="#fff" stroke-width="1.8" fill="none"/></svg></div>
<div id="client" class="abs">
<div class="abs" style="left:0;top:0;width:153px;height:465px;background:linear-gradient(#f4f8fc 0,#f2f6fa 34%,#e9ecef 45%,#dfe1e3 52%,#d3d4d5 60%,#c7c7c7 69%,#b7b7b7 80%,#adadad 90%,#a7a7a7 100%)"></div>
<svg class="abs" style="left:0;top:0" width="153" height="465" viewBox="0 0 153 465" fill="none">
<defs><radialGradient id="tg" cx=".5" cy=".5" r=".5"><stop offset="0" stop-color="#fff" stop-opacity=".5"/><stop offset="1" stop-color="#fff" stop-opacity="0"/></radialGradient></defs>
<path d="M153 130 C120 170 70 200 0 235 L0 275 C70 250 125 225 153 175 Z" fill="#fff" fill-opacity=".28"/>
<path d="M153 200 C130 235 120 260 135 300 C145 330 153 340 153 340 Z" fill="#fff" fill-opacity=".2"/>
<ellipse cx="80" cy="297" rx="62" ry="52" fill="url(#tg)"/>
<path d="M0 236.0 C50 216.0 110 190.0 153 128.0" stroke="#fff" stroke-opacity=".4" stroke-width=".7"/>
<path d="M0 238.4 C50 218.6 110 193.2 153 131.0" stroke="#fff" stroke-opacity=".4" stroke-width=".7"/>
<path d="M0 240.8 C50 221.2 110 196.4 153 134.0" stroke="#fff" stroke-opacity=".4" stroke-width=".7"/>
<path d="M0 243.2 C50 223.8 110 199.6 153 137.0" stroke="#fff" stroke-opacity=".4" stroke-width=".7"/>
<path d="M0 245.6 C50 226.4 110 202.8 153 140.0" stroke="#fff" stroke-opacity=".4" stroke-width=".7"/>
<path d="M0 248.0 C50 229.0 110 206.0 153 143.0" stroke="#fff" stroke-opacity=".4" stroke-width=".7"/>
<path d="M0 250.4 C50 231.6 110 209.2 153 146.0" stroke="#fff" stroke-opacity=".4" stroke-width=".7"/>
<path d="M0 252.8 C50 234.2 110 212.4 153 149.0" stroke="#fff" stroke-opacity=".4" stroke-width=".7"/>
<path d="M0 255.2 C50 236.8 110 215.6 153 152.0" stroke="#fff" stroke-opacity=".4" stroke-width=".7"/>
<path d="M0 257.6 C50 239.4 110 218.8 153 155.0" stroke="#fff" stroke-opacity=".4" stroke-width=".7"/>
<path d="M0 260.0 C50 242.0 110 222.0 153 158.0" stroke="#fff" stroke-opacity=".4" stroke-width=".7"/>
<path d="M0 262.4 C50 244.6 110 225.2 153 161.0" stroke="#fff" stroke-opacity=".4" stroke-width=".7"/>
<path d="M0 264.8 C50 247.2 110 228.4 153 164.0" stroke="#fff" stroke-opacity=".4" stroke-width=".7"/>
<path d="M0 267.2 C50 249.8 110 231.6 153 167.0" stroke="#fff" stroke-opacity=".4" stroke-width=".7"/>
<path d="M0 269.6 C50 252.4 110 234.8 153 170.0" stroke="#fff" stroke-opacity=".4" stroke-width=".7"/>
<path d="M0 272.0 C50 255.0 110 238.0 153 173.0" stroke="#fff" stroke-opacity=".4" stroke-width=".7"/>
<path d="M0 274.4 C50 257.6 110 241.2 153 176.0" stroke="#fff" stroke-opacity=".4" stroke-width=".7"/>
<path d="M0 276.8 C50 260.2 110 244.4 153 179.0" stroke="#fff" stroke-opacity=".4" stroke-width=".7"/>
<ellipse cx="80" cy="297" rx="16.0" ry="12.0" transform="rotate(-20 80 297)" stroke="#fff" stroke-opacity=".38" stroke-width=".7"/>
<ellipse cx="80" cy="297" rx="19.4" ry="14.9" transform="rotate(-20 80 297)" stroke="#fff" stroke-opacity=".38" stroke-width=".7"/>
<ellipse cx="80" cy="297" rx="22.8" ry="17.8" transform="rotate(-20 80 297)" stroke="#fff" stroke-opacity=".38" stroke-width=".7"/>
<ellipse cx="80" cy="297" rx="26.2" ry="20.7" transform="rotate(-20 80 297)" stroke="#fff" stroke-opacity=".38" stroke-width=".7"/>
<ellipse cx="80" cy="297" rx="29.6" ry="23.6" transform="rotate(-20 80 297)" stroke="#fff" stroke-opacity=".38" stroke-width=".7"/>
<ellipse cx="80" cy="297" rx="33.0" ry="26.5" transform="rotate(-20 80 297)" stroke="#fff" stroke-opacity=".38" stroke-width=".7"/>
<ellipse cx="80" cy="297" rx="36.4" ry="29.4" transform="rotate(-20 80 297)" stroke="#fff" stroke-opacity=".38" stroke-width=".7"/>
<ellipse cx="80" cy="297" rx="39.8" ry="32.3" transform="rotate(-20 80 297)" stroke="#fff" stroke-opacity=".38" stroke-width=".7"/>
<ellipse cx="80" cy="297" rx="43.2" ry="35.2" transform="rotate(-20 80 297)" stroke="#fff" stroke-opacity=".38" stroke-width=".7"/>
<ellipse cx="80" cy="297" rx="46.6" ry="38.1" transform="rotate(-20 80 297)" stroke="#fff" stroke-opacity=".38" stroke-width=".7"/>
<ellipse cx="80" cy="297" rx="50.0" ry="41.0" transform="rotate(-20 80 297)" stroke="#fff" stroke-opacity=".38" stroke-width=".7"/>
<ellipse cx="80" cy="297" rx="53.4" ry="43.9" transform="rotate(-20 80 297)" stroke="#fff" stroke-opacity=".38" stroke-width=".7"/>
<ellipse cx="80" cy="297" rx="56.8" ry="46.8" transform="rotate(-20 80 297)" stroke="#fff" stroke-opacity=".38" stroke-width=".7"/>
<ellipse cx="80" cy="297" rx="60.2" ry="49.7" transform="rotate(-20 80 297)" stroke="#fff" stroke-opacity=".38" stroke-width=".7"/>
<path d="M0 300.0 C40 340.0 90 372.0 153 330.0" stroke="#fff" stroke-opacity=".3" stroke-width=".7"/>
<path d="M0 304.5 C40 343.5 90 374.0 153 334.0" stroke="#fff" stroke-opacity=".3" stroke-width=".7"/>
<path d="M0 309.0 C40 347.0 90 376.0 153 338.0" stroke="#fff" stroke-opacity=".3" stroke-width=".7"/>
<path d="M0 313.5 C40 350.5 90 378.0 153 342.0" stroke="#fff" stroke-opacity=".3" stroke-width=".7"/>
<path d="M0 318.0 C40 354.0 90 380.0 153 346.0" stroke="#fff" stroke-opacity=".3" stroke-width=".7"/>
<path d="M0 322.5 C40 357.5 90 382.0 153 350.0" stroke="#fff" stroke-opacity=".3" stroke-width=".7"/>
<path d="M0 327.0 C40 361.0 90 384.0 153 354.0" stroke="#fff" stroke-opacity=".3" stroke-width=".7"/>
<path d="M0 331.5 C40 364.5 90 386.0 153 358.0" stroke="#fff" stroke-opacity=".3" stroke-width=".7"/>
<path d="M0 336.0 C40 368.0 90 388.0 153 362.0" stroke="#fff" stroke-opacity=".3" stroke-width=".7"/>
<path d="M0 340.5 C40 371.5 90 390.0 153 366.0" stroke="#fff" stroke-opacity=".3" stroke-width=".7"/>
<path d="M0 345.0 C40 375.0 90 392.0 153 370.0" stroke="#fff" stroke-opacity=".3" stroke-width=".7"/>
<path d="M0 349.5 C40 378.5 90 394.0 153 374.0" stroke="#fff" stroke-opacity=".3" stroke-width=".7"/>
</svg>
<div class="abs" style="left:142px;top:0;width:11px;height:465px;background:linear-gradient(rgba(120,130,140,.09),rgba(160,160,160,.05) 60%,rgba(255,255,255,.08))"></div>
<svg class="abs" style="left:145px;top:6px" width="5" height="3.4" viewBox="0 0 6 4"><path d="M.5 3.4 L3 .8 L5.5 3.4" stroke="#707070" stroke-width="1.2" fill="none"/></svg>
<svg class="abs" style="left:144.5px;top:457px" width="6" height="4" viewBox="0 0 6 4"><path d="M.4 .6 H5.6 L3 3.6 Z" fill="#555"/></svg>
<div class="abs" style="left:3.0px;top:5.0px;width:7px;height:7px;border:1px solid #222;background:#fff"></div>
<div class="abs" style="left:5.0px;top:8.0px;width:3px;height:1px;background:#000"></div>
<div class="abs" style="left:6.0px;top:7.0px;width:1px;height:3px;background:#000"></div>
<svg class="abs" style="left:12.0px;top:2.2px" width="12" height="11" viewBox="0 0 12 11"><defs><linearGradient id="fo0" x1="0" y1="0" x2="1" y2="1"><stop offset="0" stop-color="#f7e2a0"/><stop offset="1" stop-color="#dcb24e"/></linearGradient></defs><path d="M.8 1.6 L4.6 .5 L6.6 1.6 L10.6 1.4 L11.2 9 L8.4 10.6 L1 9.6 Z" fill="url(#fo0)" stroke="#b8923c" stroke-width=".6"/><path d="M1.2 3 L8.4 3.6 L10.8 2" stroke="#fbeec0" stroke-width=".7" fill="none"/></svg>
<span class="t" style="left:26.60px;top:3.30px;font-size:8.50px;line-height:8.50px;color:#0a0a0a;transform:scaleX(0.9809);">Stored procedures</span>
<div class="abs" style="left:3.0px;top:19.5px;width:7px;height:7px;border:1px solid #222;background:#fff"></div>
<div class="abs" style="left:5.0px;top:22.5px;width:3px;height:1px;background:#000"></div>
<div class="abs" style="left:6.0px;top:21.5px;width:1px;height:3px;background:#000"></div>
<svg class="abs" style="left:12.0px;top:16.7px" width="12" height="11" viewBox="0 0 12 11"><defs><linearGradient id="fo1" x1="0" y1="0" x2="1" y2="1"><stop offset="0" stop-color="#f7e2a0"/><stop offset="1" stop-color="#dcb24e"/></linearGradient></defs><path d="M.8 1.6 L4.6 .5 L6.6 1.6 L10.6 1.4 L11.2 9 L8.4 10.6 L1 9.6 Z" fill="url(#fo1)" stroke="#b8923c" stroke-width=".6"/><path d="M1.2 3 L8.4 3.6 L10.8 2" stroke="#fbeec0" stroke-width=".7" fill="none"/></svg>
<span class="t" style="left:26.60px;top:17.80px;font-size:8.50px;line-height:8.50px;color:#0a0a0a;transform:scaleX(0.9917);">Automatic procedures</span>
<div class="abs" style="left:153px;top:0;width:1.3px;height:465px;background:#3e3e3e"></div>
<div class="abs" style="left:599px;top:0;width:12px;height:295px;background:#f0f0f0"></div>
<div class="abs" style="left:599px;top:2.6px;width:12px;height:1.4px;background:#111"></div>
<div class="abs" style="left:609.4px;top:0;width:1.6px;height:4px;background:#111"></div>
<svg class="abs" style="left:602.0px;top:8.0px" width="6" height="4" viewBox="0 0 6 4"><path d="M.5 3.4 L3 .8 L5.5 3.4" stroke="#606060" stroke-width="1.1" fill="none"/></svg>
<svg class="abs" style="left:602.0px;top:288.0px" width="6" height="4" viewBox="0 0 6 4"><path d="M.4 .6 H5.6 L3 3.6 Z" fill="#555"/></svg>
<div class="abs" style="left:155px;top:295px;width:456px;height:15px;background:#f1f1f1"></div>
<div class="abs" style="left:156.3px;top:296.0px;width:1.2px;height:11.5px;background:#111"></div>
<div class="abs" style="left:154.6px;top:306.6px;width:2.6px;height:1.2px;background:#111"></div>
<svg class="abs" style="left:162.0px;top:298.6px" width="4" height="6" viewBox="0 0 4 6"><path d="M3.6 .4 V5.6 L.5 3 Z" fill="#333"/></svg>
<svg class="abs" style="left:591.4px;top:298.6px" width="4" height="6" viewBox="0 0 4 6"><path d="M.4 .4 V5.6 L3.5 3 Z" fill="#222"/></svg>
<div class="abs" style="left:171.3px;top:296.4px;width:411.5px;height:10.6px;border:1px solid #a3a3a3;border-radius:2px;background:linear-gradient(#fcfcfc 0,#ececec 45%,#d9d9d9 55%,#cdcdcd 100%)"></div>
<div class="abs" style="left:374.6px;top:299.4px;width:1px;height:4.4px;background:#6c6c6c"></div>
<div class="abs" style="left:376.6px;top:299.4px;width:1px;height:4.4px;background:#6c6c6c"></div>
<div class="abs" style="left:378.6px;top:299.4px;width:1px;height:4.4px;background:#6c6c6c"></div>
<div class="abs hdr" style="left:156px;top:310.4px;width:144px"></div>
<span class="t" style="left:207.90px;top:312.05px;font-size:8.80px;line-height:8.80px;color:#000;font-weight:bold;transform:scaleX(0.8808);">Key words</span>
<div class="abs hdr" style="left:300px;top:310.4px;width:154px"></div>
<span class="t" style="left:358.90px;top:312.05px;font-size:8.80px;line-height:8.80px;color:#000;font-weight:bold;transform:scaleX(0.8776);">Adressen</span>
<div class="abs hdr" style="left:454px;top:310.4px;width:154px"></div>
<span class="t" style="left:508.90px;top:312.05px;font-size:8.80px;line-height:8.80px;color:#000;font-weight:bold;transform:scaleX(0.9015);">Commands</span>
<div class="abs" style="left:0;top:0;width:611px;height:463.4px;overflow:hidden">
<span class="t" style="left:157.20px;top:322.89px;font-size:8.40px;line-height:8.40px;color:#101010;transform:scaleX(0.7598);">:=</span>
<span class="t" style="left:157.20px;top:332.36px;font-size:8.40px;line-height:8.40px;color:#101010;transform:scaleX(0.9856);">If</span>
<span class="t" style="left:157.20px;top:341.83px;font-size:8.40px;line-height:8.40px;color:#101010;transform:scaleX(0.8812);">Else</span>
<span class="t" style="left:157.20px;top:351.30px;font-size:8.40px;line-height:8.40px;color:#101010;transform:scaleX(0.9776);">End if</span>
<span class="t" style="left:157.20px;top:360.77px;font-size:8.40px;line-height:8.40px;color:#101010;transform:scaleX(0.9327);">Case of</span>
<span class="t" style="left:157.20px;top:370.24px;font-size:8.40px;line-height:8.40px;color:#101010;transform:scaleX(0.6856);">:</span>
<span class="t" style="left:157.20px;top:379.71px;font-size:8.40px;line-height:8.40px;color:#101010;transform:scaleX(0.9279);">End case</span>
<span class="t" style="left:157.20px;top:389.18px;font-size:8.40px;line-height:8.40px;color:#101010;transform:scaleX(1.0283);">While</span>
<span class="t" style="left:157.20px;top:398.65px;font-size:8.40px;line-height:8.40px;color:#101010;">End while</span>
<span class="t" style="left:157.20px;top:408.12px;font-size:8.40px;line-height:8.40px;color:#101010;transform:scaleX(0.9841);">For</span>
<span class="t" style="left:157.20px;top:417.59px;font-size:8.40px;line-height:8.40px;color:#101010;transform:scaleX(1.0117);">End for</span>
<span class="t" style="left:157.20px;top:427.06px;font-size:8.40px;line-height:8.40px;color:#101010;transform:scaleX(0.9599);">Repeat</span>
<span class="t" style="left:157.20px;top:436.53px;font-size:8.40px;line-height:8.40px;color:#101010;transform:scaleX(1.0592);">Until</span>
<span class="t" style="left:159.40px;top:446.00px;font-size:8.40px;line-height:8.40px;color:#101010;transform:scaleX(1.0708);">&amp;</span>
<span class="t" style="left:159.40px;top:455.47px;font-size:8.40px;line-height:8.40px;color:#101010;">|</span>
<span class="t" style="left:300.90px;top:332.36px;font-size:8.40px;line-height:8.40px;color:#101010;transform:scaleX(0.9375);">OID</span>
<span class="t" style="left:300.90px;top:341.83px;font-size:8.40px;line-height:8.40px;color:#101010;transform:scaleX(0.9860);">erstellt am</span>
<span class="t" style="left:300.90px;top:351.30px;font-size:8.40px;line-height:8.40px;color:#101010;transform:scaleX(1.0231);">erstellt durch</span>
<span class="t" style="left:300.90px;top:360.77px;font-size:8.40px;line-height:8.40px;color:#101010;transform:scaleX(0.9880);">geändert am</span>
<span class="t" style="left:300.90px;top:370.24px;font-size:8.40px;line-height:8.40px;color:#101010;transform:scaleX(1.0175);">geändert durch</span>
<span class="t" style="left:300.90px;top:379.71px;font-size:8.40px;line-height:8.40px;color:#101010;transform:scaleX(0.9283);">KdOID</span>
<span class="t" style="left:300.90px;top:389.18px;font-size:8.40px;line-height:8.40px;color:#101010;transform:scaleX(0.9104);">Name</span>
<span class="t" style="left:300.90px;top:398.65px;font-size:8.40px;line-height:8.40px;color:#101010;transform:scaleX(0.8989);">Strasse</span>
<span class="t" style="left:300.90px;top:408.12px;font-size:8.40px;line-height:8.40px;color:#101010;transform:scaleX(0.7789);">PLZ</span>
<span class="t" style="left:300.90px;top:417.59px;font-size:8.40px;line-height:8.40px;color:#101010;transform:scaleX(0.9944);">Ort</span>
<span class="t" style="left:300.90px;top:427.06px;font-size:8.40px;line-height:8.40px;color:#101010;transform:scaleX(0.9418);">Land</span>
<span class="t" style="left:300.90px;top:436.53px;font-size:8.40px;line-height:8.40px;color:#101010;transform:scaleX(0.9607);">Postfach</span>
<span class="t" style="left:300.90px;top:446.00px;font-size:8.40px;line-height:8.40px;color:#101010;transform:scaleX(0.9149);">PLZPostfach</span>
<span class="t" style="left:300.90px;top:455.47px;font-size:8.40px;line-height:8.40px;color:#101010;transform:scaleX(0.9126);">Tel</span>
<span class="t" style="left:455.20px;top:322.89px;font-size:8.40px;line-height:8.40px;color:#101010;transform:scaleX(0.8720);">ABORT</span>
<span class="t" style="left:455.20px;top:332.36px;font-size:8.40px;line-height:8.40px;color:#101010;transform:scaleX(0.9119);">Abs</span>
<span class="t" style="left:455.20px;top:341.83px;font-size:8.40px;line-height:8.40px;color:#101010;transform:scaleX(0.8012);">ACCEPT</span>
<span class="t" style="left:455.20px;top:351.30px;font-size:8.40px;line-height:8.40px;color:#101010;transform:scaleX(0.8803);">ACCUMULATE</span>
<span class="t" style="left:455.20px;top:360.77px;font-size:8.40px;line-height:8.40px;color:#101010;transform:scaleX(0.9840);">Activated</span>
<span class="t" style="left:455.20px;top:370.24px;font-size:8.40px;line-height:8.40px;color:#101010;transform:scaleX(0.9015);">ADD DATA SEGMENT</span>
<span class="t" style="left:455.20px;top:379.71px;font-size:8.40px;line-height:8.40px;color:#101010;transform:scaleX(0.8925);">ADD RECORD</span>
<span class="t" style="left:455.20px;top:389.18px;font-size:8.40px;line-height:8.40px;color:#101010;transform:scaleX(0.8963);">ADD SUBRECORD</span>
<span class="t" style="left:455.20px;top:398.65px;font-size:8.40px;line-height:8.40px;color:#101010;transform:scaleX(1.0240);">Add to date</span>
<span class="t" style="left:455.20px;top:408.12px;font-size:8.40px;line-height:8.40px;color:#101010;transform:scaleX(0.8642);">ADD TO SET</span>
<span class="t" style="left:455.20px;top:417.59px;font-size:8.40px;line-height:8.40px;color:#101010;">After</span>
<span class="t" style="left:455.20px;top:427.06px;font-size:8.40px;line-height:8.40px;color:#101010;transform:scaleX(0.8023);">ALERT</span>
<span class="t" style="left:455.20px;top:436.53px;font-size:8.40px;line-height:8.40px;color:#101010;transform:scaleX(0.8546);">ALL RECORDS</span>
<span class="t" style="left:455.20px;top:446.00px;font-size:8.40px;line-height:8.40px;color:#101010;transform:scaleX(0.8669);">ALL SUBRECORDS</span>
<span class="t" style="left:455.20px;top:455.47px;font-size:8.40px;line-height:8.40px;color:#101010;transform:scaleX(0.8827);">APPEND DATA TO PASTEBOARD</span>
</div>
<div class="abs sb" style="left:288.4px;top:323.0px;height:141.0px"></div>
<svg class="abs" style="left:291.0px;top:326.4px" width="6" height="4" viewBox="0 0 6 4"><path d="M.4 3.5 H5.6 L3 .5 Z" fill="#444"/></svg>
<svg class="abs" style="left:291.0px;top:454.0px" width="6" height="4" viewBox="0 0 6 4"><path d="M.4 .5 H5.6 L3 3.5 Z" fill="#444"/></svg>
<div class="abs th" style="left:288.8px;top:335.0px;width:10.4px;height:105.4px"></div>
<div class="abs" style="left:291.8px;top:385.2px;width:4.4px;height:1px;background:#6c6c6c"></div>
<div class="abs" style="left:291.8px;top:387.2px;width:4.4px;height:1px;background:#6c6c6c"></div>
<div class="abs" style="left:291.8px;top:389.2px;width:4.4px;height:1px;background:#6c6c6c"></div>
<div class="abs sb" style="left:443.2px;top:323.0px;height:141.0px"></div>
<svg class="abs" style="left:445.8px;top:326.4px" width="6" height="4" viewBox="0 0 6 4"><path d="M.4 3.5 H5.6 L3 .5 Z" fill="#444"/></svg>
<svg class="abs" style="left:445.8px;top:454.0px" width="6" height="4" viewBox="0 0 6 4"><path d="M.4 .5 H5.6 L3 3.5 Z" fill="#444"/></svg>
<div class="abs th" style="left:443.6px;top:336.0px;width:10.4px;height:39.2px"></div>
<div class="abs" style="left:446.6px;top:353.1px;width:4.4px;height:1px;background:#6c6c6c"></div>
<div class="abs" style="left:446.6px;top:355.1px;width:4.4px;height:1px;background:#6c6c6c"></div>
<div class="abs" style="left:446.6px;top:357.1px;width:4.4px;height:1px;background:#6c6c6c"></div>
<div class="abs sb" style="left:596.2px;top:323.0px;height:130.5px"></div>
<svg class="abs" style="left:598.8px;top:326.4px" width="6" height="4" viewBox="0 0 6 4"><path d="M.4 3.5 H5.6 L3 .5 Z" fill="#444"/></svg>
<div class="abs th" style="left:596.6px;top:335.5px;width:10.4px;height:10.7px"></div>
<div class="abs" style="left:155px;top:463.8px;width:444px;height:1.2px;background:#777"></div>
</div>
<svg class="abs" style="left:760px;top:626px" width="13.4" height="13.4" viewBox="0 0 13.4 13.4"><rect width="13.4" height="13.4" fill="#f0f3f7"/><g fill="#c2c8d0"><rect x="8.6" y="8.6" width="1.6" height="1.6"/><rect x="8.6" y="5.6" width="1.6" height="1.6"/><rect x="5.6" y="8.6" width="1.6" height="1.6"/><rect x="8.6" y="2.6" width="1.6" height="1.6"/><rect x="5.6" y="5.6" width="1.6" height="1.6"/><rect x="2.6" y="8.6" width="1.6" height="1.6"/></g></svg>
<div id="status" class="abs"><div class="cell abs"></div>
<span class="t" style="left:4.70px;top:4.79px;font-size:8.75px;line-height:8.75px;color:#000;font-weight:bold;transform:scaleX(0.8868);">Script editor</span>
</div>
</div>
</body>
</html>
